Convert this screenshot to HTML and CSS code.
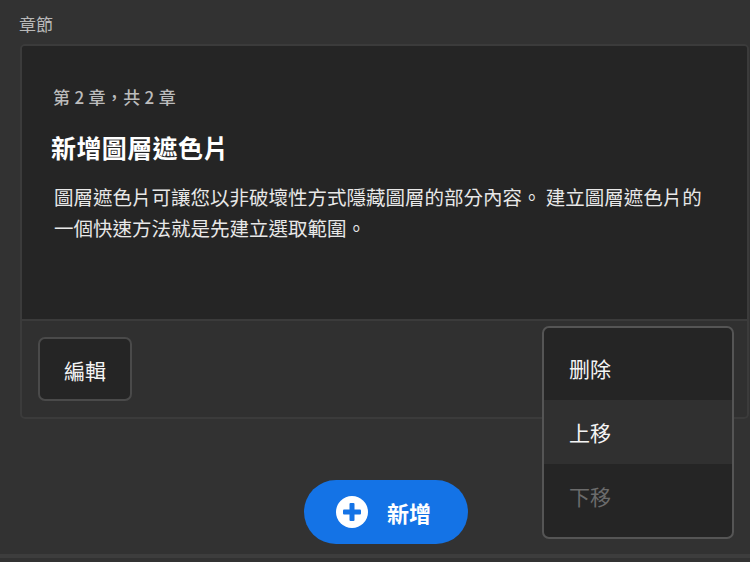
FILE: index.html
```html
<!DOCTYPE html>
<html lang="zh-Hant">
<head>
<meta charset="utf-8">
<link rel="stylesheet" href="styles.css">
</head>
<body>
<div class="page">
  <div class="section-label">章節</div>
  <div class="card">
    <div class="card-body">
      <div class="count">第 2 章，共 2 章</div>
      <h2 class="title">新增圖層遮色片</h2>
      <p class="desc">圖層遮色片可讓您以非破壞性方式隱藏圖層的部分內容。 建立圖層遮色片的一個快速方法就是先建立選取範圍。</p>
    </div>
    <div class="card-footer">
      <button class="edit-btn">編輯</button>
    </div>
  </div>
  <div class="add-row">
    <button class="add-btn">
      <svg class="plus" width="32" height="32" viewBox="0 0 32 32">
        <circle cx="16" cy="16" r="16" fill="#fff"/>
        <rect x="13.5" y="7" width="5" height="18" rx="1" fill="#1473e6"/>
        <rect x="7" y="13.5" width="18" height="5" rx="1" fill="#1473e6"/>
      </svg>
      <span>新增</span>
    </button>
  </div>
  <div class="bottom-bar"></div>
  <div class="menu">
    <div class="menu-item">删除</div>
    <div class="menu-item hover">上移</div>
    <div class="menu-item disabled">下移</div>
  </div>
</div>
</body>
</html>
```
FILE: styles.css
```css
* { box-sizing: border-box; }
html, body { margin: 0; padding: 0; }
body {
  background: #323232;
  font-family: "Noto Sans CJK TC", "Noto Sans", sans-serif;
  width: 750px;
  height: 562px;
  overflow: hidden;
}
.page {
  position: relative;
  width: 750px;
  height: 562px;
  padding-top: 11px;
}
.section-label {
  color: #b8b8b8;
  font-size: 17px;
  line-height: 26px;
  padding-left: 19px;
  height: 33px;
}
.card {
  margin-left: 20px;
  width: 729px;
  border: 2px solid #3b3b3b;
  border-radius: 5px;
  background: #303030;
  overflow: hidden;
}
.card-body {
  background: #252525;
  height: 275px;
  padding: 38px 30px 0 31px;
  border-bottom: 2px solid #3b3b3b;
}
.count {
  color: #bcbcbc;
  font-size: 17px;
  line-height: 26px;
  letter-spacing: 0.3px;
  font-weight: 500;
}
.title {
  margin: 20px 0 0 -2px;
  color: #ffffff;
  font-size: 25px;
  font-weight: 700;
  line-height: 34px;
  letter-spacing: 0.4px;
}
.desc {
  margin: 17px 0 0 1px;
  color: #e8e8e8;
  font-size: 19.5px;
  line-height: 31px;
  width: 660px;
}
.card-footer {
  height: 96px;
  padding: 16px 0 0 16px;
}
.edit-btn {
  width: 94px;
  height: 64px;
  background: #252525;
  border: 2px solid #4a4a4a;
  border-radius: 7px;
  color: #f4f4f4;
  font-family: inherit;
  font-size: 21px;
  padding: 2px 0 0;
}
.add-row {
  display: flex;
  justify-content: center;
  margin-left: 20px;
  width: 732px;
  padding-top: 61px;
}
.add-btn {
  display: flex;
  align-items: center;
  gap: 19px;
  width: 164px;
  height: 64px;
  border-radius: 32px;
  border: none;
  background: #1473e6;
  color: #fff;
  font-family: inherit;
  font-size: 22px;
  font-weight: 700;
  padding: 0 0 0 32px;
}
.plus { flex: none; }
.bottom-bar {
  position: absolute;
  left: 0;
  right: 0;
  top: 554px;
  height: 4px;
  background: #3d3d3d;
}
.menu {
  position: absolute;
  left: 542px;
  top: 326px;
  width: 192px;
  height: 213px;
  border: 2px solid #555555;
  border-radius: 7px;
  background: #252525;
  overflow: hidden;
  padding-top: 8px;
}
.menu-item {
  height: 64px;
  padding-left: 25px;
  display: flex;
  align-items: center;
  color: #f4f4f4;
  font-size: 21px;
}
.menu-item.hover { background: #303030; }
.menu-item.disabled { color: #6b6b6b; }
```
